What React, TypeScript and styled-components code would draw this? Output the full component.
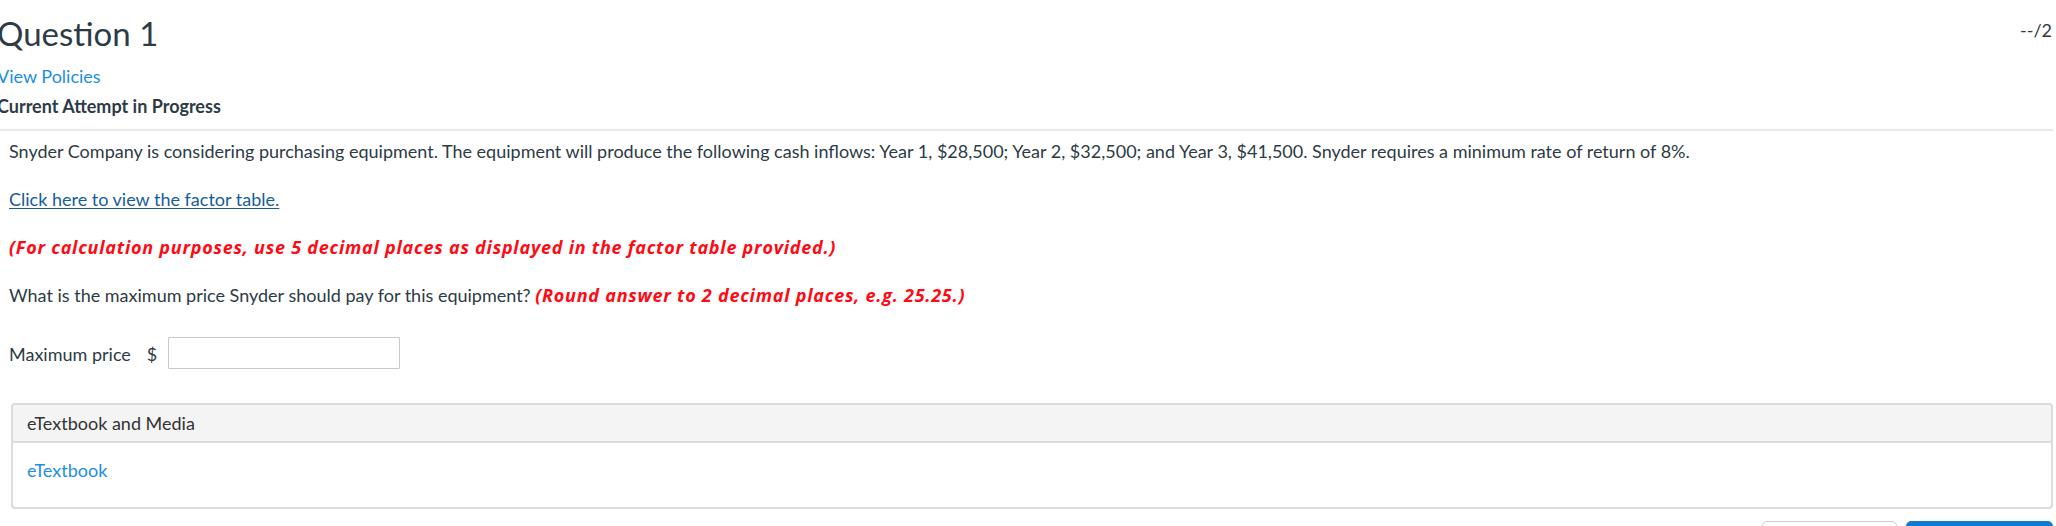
import React from 'react'
import styled, { createGlobalStyle } from 'styled-components'

const GlobalStyle = createGlobalStyle`
  * {
    box-sizing: border-box;
  }

  body {
    margin: 0;
    background: #ffffff;
    font-family: Lato, 'Noto Sans', sans-serif;
    font-size: 18px;
    line-height: 24px;
    color: #2d3b45;
  }
`

const Page = styled.div`
  padding-right: 3px;
  overflow: hidden;
`

const QuestionHeader = styled.header`
  margin-left: -3px;
  padding: 12px 0 11px;
  border-bottom: 2px solid #e8e8e8;
`

const TitleRow = styled.div`
  display: flex;
  justify-content: space-between;
  align-items: flex-start;
`

const Title = styled.h1`
  margin: 0;
  font-size: 33px;
  line-height: 42px;
  font-weight: 400;
  color: #2d3b45;
`

const Score = styled.span`
  margin-top: 6px;
  margin-right: 1px;
  font-size: 18px;
`

const PolicyLink = styled.a`
  display: block;
  margin-top: 10px;
  color: #1b8fe0;
  text-decoration: none;
`

const AttemptStatus = styled.div`
  margin-top: 6px;
  font-weight: 700;
`

// flex column so the block margins below add up instead of collapsing
const QuestionBody = styled.section`
  display: flex;
  flex-direction: column;
  padding: 8px 0 0 9px;
`

const Paragraph = styled.p`
  margin: 0 0 24px;
`

const TableLink = styled.a`
  color: #155d9b;
  text-decoration: underline;
  text-underline-offset: 2px;
`

const Hint = styled.span`
  font-family: 'Open Sans', 'DejaVu Sans', sans-serif;
  font-style: italic;
  font-weight: 700;
  font-size: 18px;
  letter-spacing: 0.75px;
  color: #ff0a14;
`

const AnswerRow = styled.div`
  display: flex;
  align-items: flex-start;
  margin-top: 6px;
`

const AnswerLabel = styled.label`
  margin-top: 5px;
`

const Currency = styled.span`
  margin: 5px 0 0 16px;
`

const AnswerInput = styled.input`
  width: 232px;
  height: 32px;
  margin-left: 11px;
  border: 1px solid #c9c9c9;
  border-radius: 1px;
  font: inherit;
  padding: 0 6px;
  outline: none;
`

const MediaPanel = styled.div`
  margin: 34px 0 0 2px;
  border: 2px solid #dcdcdc;
  border-radius: 4px;
  overflow: hidden;
`

const PanelHeader = styled.div`
  background: #f4f4f4;
  padding: 6px 14px;
  border-bottom: 2px solid #dcdcdc;
  color: #333333;
`

const PanelBody = styled.div`
  padding: 15px 14px 25px;
`

const MediaLink = styled.a`
  color: #1b8fe0;
  text-decoration: none;
`

const Actions = styled.div`
  display: flex;
  justify-content: flex-end;
  gap: 9px;
  margin-top: 12px;
`

const ActionButton = styled.button<{ $primary?: boolean }>`
  width: ${({ $primary }) => ($primary ? '147px' : '135px')};
  height: 40px;
  border-radius: 5px;
  font: inherit;
  font-size: 16px;
  cursor: pointer;
  color: ${({ $primary }) => ($primary ? '#ffffff' : '#2d3b45')};
  background: ${({ $primary }) => ($primary ? '#0e7bd0' : '#ffffff')};
  border: 1px solid ${({ $primary }) => ($primary ? '#0e7bd0' : '#c7cdd1')};
`

export default function App() {
  return (
    <Page>
      <GlobalStyle />
      <QuestionHeader>
        <TitleRow>
          <Title>Question 1</Title>
          <Score>--/2</Score>
        </TitleRow>
        <PolicyLink href="#">View Policies</PolicyLink>
        <AttemptStatus>Current Attempt in Progress</AttemptStatus>
      </QuestionHeader>

      <QuestionBody>
        <Paragraph>
          Snyder Company is considering purchasing equipment. The equipment will produce the following cash
          inflows: Year 1, $28,500; Year 2, $32,500; and Year 3, $41,500. Snyder requires a minimum rate of
          return of 8%.
        </Paragraph>
        <Paragraph>
          <TableLink href="#">Click here to view the factor table.</TableLink>
        </Paragraph>
        <Paragraph>
          <Hint>(For calculation purposes, use 5 decimal places as displayed in the factor table provided.)</Hint>
        </Paragraph>
        <Paragraph>
          What is the maximum price Snyder should pay for this equipment?{' '}
          <Hint>(Round answer to 2 decimal places, e.g. 25.25.)</Hint>
        </Paragraph>

        <AnswerRow>
          <AnswerLabel htmlFor="max-price">Maximum price</AnswerLabel>
          <Currency>$</Currency>
          <AnswerInput id="max-price" type="text" />
        </AnswerRow>

        <MediaPanel>
          <PanelHeader>eTextbook and Media</PanelHeader>
          <PanelBody>
            <MediaLink href="#">eTextbook</MediaLink>
          </PanelBody>
        </MediaPanel>

        <Actions>
          <ActionButton>Save for Later</ActionButton>
          <ActionButton $primary>Submit Answer</ActionButton>
        </Actions>
      </QuestionBody>
    </Page>
  )
}
